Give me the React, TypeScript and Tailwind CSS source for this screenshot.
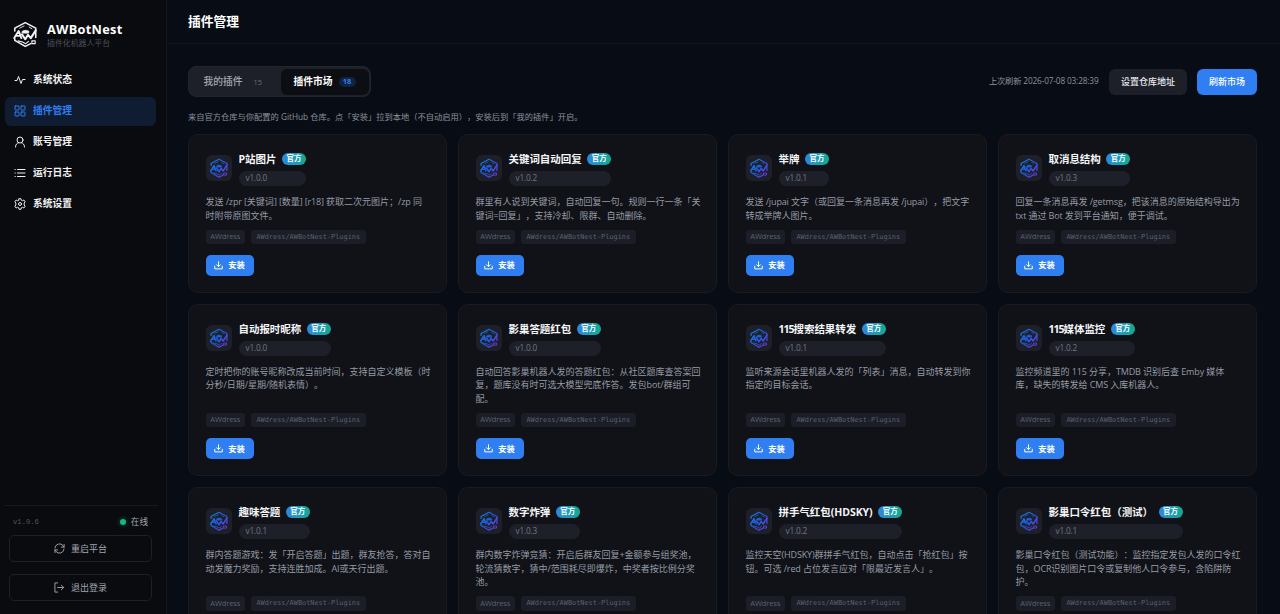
import React from "react";

type Plugin = { name: string; version: string; lines: string[] };

const rows: Plugin[][] = [
  [
    { name: "P站图片", version: "v1.0.0", lines: ["发送 /zpr [关键词] [数量] [r18] 获取二次元图片；/zp 同", "时附带原图文件。"] },
    { name: "关键词自动回复", version: "v1.0.2", lines: ["群里有人说到关键词，自动回复一句。规则一行一条「关", "键词=回复」，支持冷却、限群、自动删除。"] },
    { name: "举牌", version: "v1.0.1", lines: ["发送 /jupai 文字（或回复一条消息再发 /jupai），把文字", "转成举牌人图片。"] },
    { name: "取消息结构", version: "v1.0.3", lines: ["回复一条消息再发 /getmsg，把该消息的原始结构导出为", "txt 通过 Bot 发到平台通知，便于调试。"] },
  ],
  [
    { name: "自动报时昵称", version: "v1.0.0", lines: ["定时把你的账号昵称改成当前时间，支持自定义模板（时", "分秒/日期/星期/随机表情）。"] },
    { name: "影巢答题红包", version: "v1.0.0", lines: ["自动回答影巢机器人发的答题红包：从社区题库查答案回", "复，题库没有时可选大模型兜底作答。发包bot/群组可", "配。"] },
    { name: "115搜索结果转发", version: "v1.0.1", lines: ["监听来源会话里机器人发的「列表」消息，自动转发到你", "指定的目标会话。"] },
    { name: "115媒体监控", version: "v1.0.2", lines: ["监控频道里的 115 分享，TMDB 识别后查 Emby 媒体", "库，缺失的转发给 CMS 入库机器人。"] },
  ],
  [
    { name: "趣味答题", version: "v1.0.1", lines: ["群内答题游戏：发「开启答题」出题，群友抢答，答对自", "动发魔力奖励，支持连胜加成。AI或天行出题。"] },
    { name: "数字炸弹", version: "v1.0.3", lines: ["群内数字炸弹竞猜：开启后群友回复+金额参与组奖池，", "轮流猜数字，猜中/范围耗尽即爆炸，中奖者按比例分奖", "池。"] },
    { name: "拼手气红包(HDSKY)", version: "v1.0.2", lines: ["监控天空(HDSKY)群拼手气红包，自动点击「抢红包」按", "钮。可选 /red 占位发言应对「限最近发言人」。"] },
    { name: "影巢口令红包（测试）", version: "v1.0.1", lines: ["影巢口令红包（测试功能）：监控指定发包人发的口令红", "包，OCR识别图片口令或复制他人口令参与，含陷阱防", "护。"] },
  ],
];

function Logo({ className, stroke }: { className: string; stroke: string }) {
  return (
    <svg viewBox="0 0 48 48" className={className} fill="none" stroke={stroke} strokeLinejoin="round" strokeLinecap="round">
      <defs>
        <linearGradient id="brand" x1="4" y1="8" x2="44" y2="42" gradientUnits="userSpaceOnUse">
          <stop offset="0" stopColor="#1480e0" />
          <stop offset="0.5" stopColor="#2158dc" />
          <stop offset="1" stopColor="#7c3aed" />
        </linearGradient>
      </defs>
      <path d="M5 18V13L24 3L43 13V30M34 41L24 46L5 35V32" strokeWidth="2.8" />
      <path d="M14 13L22 9M31 11L36 14" strokeWidth="1.6" />
      <path d="M4 31L12 18L17 31M9 27H15" strokeWidth="3.4" />
      <path d="M18 24L24 33L29 25L34 31L43 17" strokeWidth="3.8" />
      <path d="M18 19C21 16 28 16 31 19L30 22H19Z" fill={stroke} strokeWidth="1" />
      <path d="M11 36L19 38L25 41L30 37" strokeWidth="2" />
      <path d="M36 36H42V41H36Z" strokeWidth="2" />
    </svg>
  );
}

function Icon({ children, className, weight = 2 }: { children: React.ReactNode; className: string; weight?: number }) {
  return (
    <svg viewBox="0 0 24 24" className={className} fill="none" stroke="currentColor" strokeWidth={weight} strokeLinecap="round" strokeLinejoin="round">
      {children}
    </svg>
  );
}

function Mixed({ text }: { text: string }) {
  return (
    <>
      {text.split(/([ -~]+)/).map((part, i) =>
        i % 2 ? (
          <span key={i} className="tracking-[-0.14px]">
            {part}
          </span>
        ) : (
          part
        ),
      )}
    </>
  );
}

const nav = [
  { label: "系统状态", icon: <path d="M2 13H6L9 5L14 19L17 11H22" /> },
  {
    label: "插件管理",
    active: true,
    icon: (
      <>
        <rect x="2" y="2" width="8" height="8" rx="1" />
        <rect x="14" y="2" width="8" height="8" rx="1" />
        <rect x="2" y="14" width="8" height="8" rx="1" />
        <rect x="14" y="14" width="8" height="8" rx="1" />
      </>
    ),
  },
  {
    label: "账号管理",
    icon: (
      <>
        <circle cx="12" cy="8" r="6" />
        <path d="M3 22C3 17 6 14 9 13.5M21 22C21 17 18 14 15 13.5" />
      </>
    ),
  },
  { label: "运行日志", icon: <path d="M7 5H22M7 12H22M7 19H22M2 5H2.5M2 12H2.5M2 19H2.5" /> },
  {
    label: "系统设置",
    icon: (
      <>
        <circle cx="12" cy="12" r="3" />
        <path d="M10 1.5H14L14.7 4.5L17 5.5L19.7 4L22.3 7.5L20.3 10V14L22.3 16.5L19.7 20L17 18.5L14.7 19.5L14 22.5H10L9.3 19.5L7 18.5L4.3 20L1.7 16.5L3.7 14V10L1.7 7.5L4.3 4L7 5.5L9.3 4.5Z" />
      </>
    ),
  },
];

function PluginCard({ p, tall }: { p: Plugin; tall: boolean }) {
  const digits = p.name.match(/^\d+/)?.[0] ?? "";
  return (
    <article className={`flex flex-col rounded-[10px] border border-[#191b22] bg-[#101218] pl-[16.5px] pr-4 pt-[17px] ${tall ? "h-[172px]" : "h-[158.5px]"}`}>
      <div className="flex h-[36px] gap-[7px]">
        <div className="mt-[3px] flex size-[26px] shrink-0 items-center justify-center rounded-[6px] bg-[#1e2029]">
          <Logo className="size-[20px]" stroke="url(#brand)" />
        </div>
        <div className="flex flex-col whitespace-nowrap">
          <div className="flex h-[14px] items-center gap-[5.5px]">
            <span className="text-[10.5px] leading-[14px] font-bold tracking-[-0.05px] text-[#f4f5f7]">
              {digits && <span className="tracking-[-1px]">{digits}</span>}
              {p.name.slice(digits.length)}
            </span>
            <span className="flex h-3 w-6 items-center justify-center rounded-full bg-linear-to-r from-[#2d86dd] to-[#16a98f] text-[7.5px] font-bold text-white">官方</span>
          </div>
          <div className="mt-[5px] flex h-[15px] items-center rounded-full bg-[#1e2029] px-[7px] text-[8.25px] tracking-[-0.2px] text-[#717681]">{p.version}</div>
        </div>
      </div>
      <div className={`mt-[7px] whitespace-nowrap text-[9px] leading-[13.5px] text-[#969ba5] ${tall ? "h-[40.5px]" : "h-[27px]"}`}>
        {p.lines.map((line) => (
          <div key={line}>
            <Mixed text={line} />
          </div>
        ))}
      </div>
      <div className="mt-[7.5px] flex h-[14.5px] shrink-0 gap-[5.5px] whitespace-nowrap text-[7.5px] text-[#5b606d]">
        <span className="flex w-[39.5px] items-center justify-center rounded-[3px] bg-[#1c1e27] tracking-[-0.12px]">AWdress</span>
        <span className="flex w-[115.5px] items-center justify-center rounded-[3px] bg-[#1c1e27] font-['DejaVu_Sans_Mono',monospace] text-[6.9px]">AWdress/AWBotNest-Plugins</span>
      </div>
      <button className="mt-[10.5px] flex h-[21px] w-12 shrink-0 items-center justify-center gap-[5px] rounded-[5px] bg-[#2f7ff2] pt-px text-[8.25px] font-bold text-white">
        <Icon className="size-[9px]" weight={2.6}>
          <path d="M12 2V14M7 10L12 15L17 10M2 14V21H22V14" />
        </Icon>
        安装
      </button>
    </article>
  );
}

export default function App() {
  return (
    <div className="flex h-[614px] w-[1280px] overflow-hidden bg-[#080c14] font-['Open_Sans','Noto_Sans_CJK_SC',sans-serif] text-white [text-spacing-trim:space-all]">
      <aside className="flex w-[167px] shrink-0 flex-col border-r border-[#121722] bg-[#0a0b0f]">
        <div className="flex h-[66px] items-center gap-[8.5px] pl-3 pt-[3px]">
          <Logo className="size-[26.5px]" stroke="#f1f2f4" />
          <div className="whitespace-nowrap">
            <div className="text-[12.75px] leading-[14px] font-bold tracking-[0.3px]">AWBotNest</div>
            <div className="mt-[2px] text-[7.9px] leading-[10px] text-[#4c505a]">插件化机器人平台</div>
          </div>
        </div>
        <nav className="flex flex-col gap-[2px] pl-[5px] pr-[10px]">
          {nav.map((n) => (
            <div key={n.label} className={`flex h-[29px] items-center gap-[7.5px] rounded-[6px] pl-[8.5px] text-[9.75px] font-bold ${n.active ? "bg-[#101c31] text-[#2f7ff2]" : "text-[#f1f2f4]"}`}>
              <Icon className="mb-px size-[12px]">{n.icon}</Icon>
              <span className="pt-[0.5px]">{n.label}</span>
            </div>
          ))}
        </nav>
        <div className="mt-auto ml-1 mr-2 flex h-[109px] flex-col border-t border-[#171a20] px-[5px] pt-[9px]">
          <div className="flex h-[15px] items-center justify-between pl-1 pr-[5px] text-[8.6px] text-[#a1a6b0]">
            <span className="font-['Liberation_Mono',monospace] text-[7.2px] text-[#50545e]">v1.0.6</span>
            <span className="flex items-center gap-[5px]">
              <i className="size-[6px] rounded-full bg-[#10b981] shadow-[0_0_5px_#10b98180]" />
              在线
            </span>
          </div>
          <button className="mt-[5px] flex h-[27px] w-[143px] shrink-0 items-center justify-center gap-[6px] rounded-[5px] border border-[#1d2027] text-[9px] text-[#a1a6b0]">
            <Icon className="size-[11px]">
              <path d="M2 11A10 10 0 0 1 20 6L22 9M22 3V9H16M22 13A10 10 0 0 1 4 18L2 15M2 21V15H8" />
            </Icon>
            重启平台
          </button>
          <button className="mt-3 flex h-[27px] w-[143px] shrink-0 items-center justify-center gap-[6px] rounded-[5px] border border-[#1d2027] text-[9px] text-[#a1a6b0]">
            <Icon className="size-[11px]">
              <path d="M8 2H2V22H8M8 12H21M16 7L21 12L16 17" />
            </Icon>
            退出登录
          </button>
        </div>
      </aside>
      <main className="flex min-w-0 flex-1 flex-col">
        <header className="flex h-[44px] shrink-0 items-center border-b border-[#101621] pl-[21px] pt-px text-[12.75px] font-bold">插件管理</header>
        <div className="flex flex-col pl-[21px] pr-[23px] pt-[22px]">
          <div className="flex h-[31px] items-center justify-between">
            <div className="flex h-[31px] w-[183px] items-center rounded-[8px] border border-[#23252e] bg-[#1e2029] p-px">
              <div className="flex w-[91px] items-center pl-[13.5px] pt-[2px] text-[9.75px] font-medium text-[#a4a8b2]">
                我的插件<span className="ml-[11px] text-[7.5px] text-[#696e7a]">15</span>
              </div>
              <div className="flex h-[26px] w-[88px] items-center rounded-[6px] bg-[#0c0e14] pl-[12.5px] text-[9.75px] font-bold">
                <span className="pt-[2px]">插件市场</span>
                <span className="ml-[6px] flex h-[10px] w-[17px] items-center justify-center rounded-full bg-[#10233f] text-[7.5px] text-[#2f7ff2]">18</span>
              </div>
            </div>
            <div className="flex items-center whitespace-nowrap">
              <span className="text-[8.25px] tracking-[-0.14px] text-[#8c919c]">上次刷新 2026-07-08 03:28:39</span>
              <button className="ml-[10.5px] h-[26px] w-[78px] rounded-[6px] bg-[#1e2029] pt-px text-[9px] font-medium text-[#e9eaee]">设置仓库地址</button>
              <button className="ml-[10px] h-[26px] w-[60px] rounded-[6px] bg-[#2f7ff2] pt-px text-[9px] font-medium text-white">刷新市场</button>
            </div>
          </div>
          <p className="mt-[13px] h-[14px] whitespace-nowrap text-[8.25px] leading-[14px] text-[#8c919c]">来自官方仓库与你配置的 GitHub 仓库。点「安装」拉到本地（不自动启用），安装后到「我的插件」开启。</p>
          <div className="mt-[10px] flex flex-col gap-[11.25px]">
            {rows.map((row, i) => (
              <div key={i} className="grid grid-cols-4 gap-[11px]">
                {row.map((p) => (
                  <PluginCard key={p.name} p={p} tall={i > 0} />
                ))}
              </div>
            ))}
          </div>
        </div>
      </main>
    </div>
  );
}
